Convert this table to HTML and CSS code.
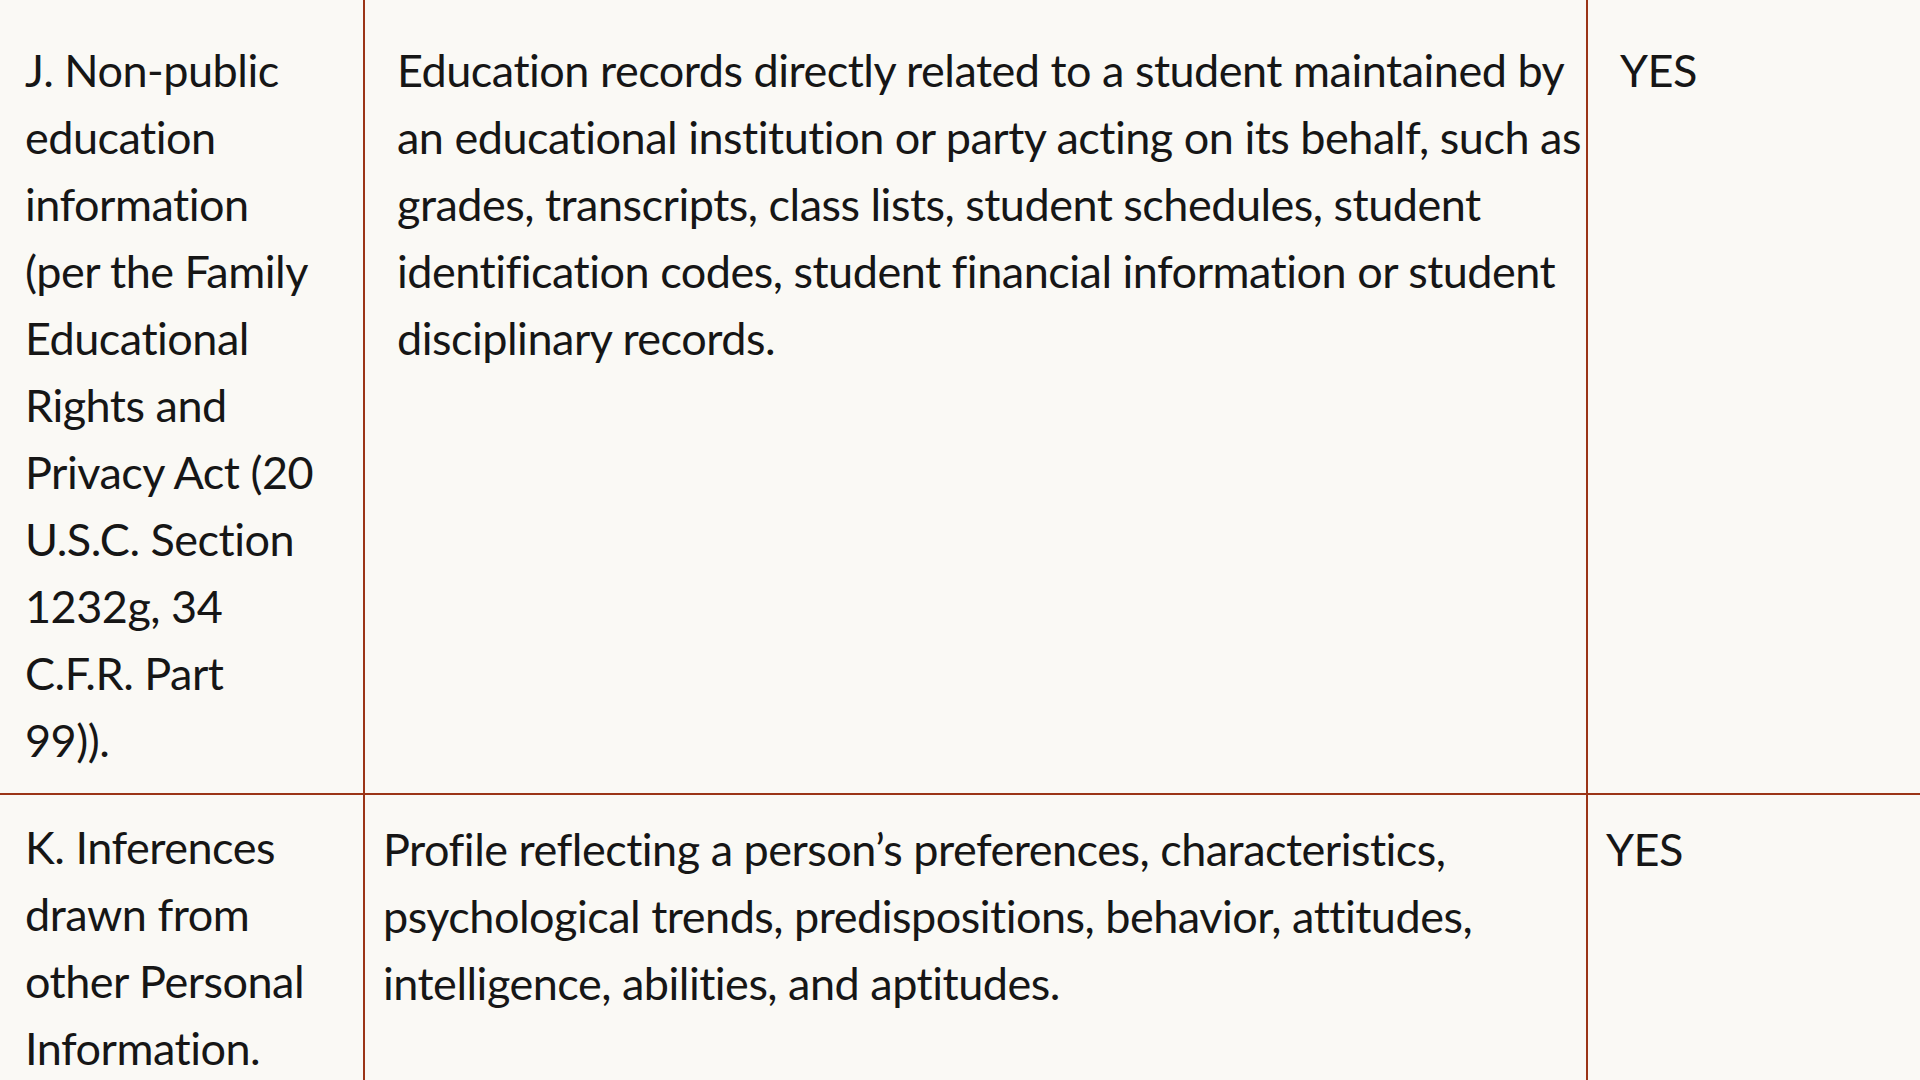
FILE: index.html
```html
<!DOCTYPE html>
<html lang="en">
<head>
<meta charset="utf-8">
<title>Categories of Personal Information</title>
<link rel="stylesheet" href="styles.css">
</head>
<body>
<div class="table">
  <div class="row row-first">
    <div class="cell cell-category">J. Non-public education information (per the Family Educational Rights and Privacy Act (20 U.S.C. Section 1232g, 34 C.F.R. Part 99)).</div>
    <div class="cell cell-examples cell-indented">Education records directly related to a student maintained by an educational institution or party acting on its behalf, such as grades, transcripts, class lists, student schedules, student identification codes, student financial information or student disciplinary records.</div>
    <div class="cell cell-collected cell-indented">YES</div>
  </div>
  <div class="row">
    <div class="cell cell-category">K. Inferences drawn from other Personal Information.</div>
    <div class="cell cell-examples cell-offset">Profile reflecting a person’s preferences, characteristics, psychological trends, predispositions, behavior, attitudes, intelligence, abilities, and aptitudes.</div>
    <div class="cell cell-collected cell-offset">YES</div>
  </div>
</div>
</body>
</html>
```
FILE: styles.css
```css
html, body {
  margin: 0;
  padding: 0;
  background: #faf9f5;
}

body {
  font-family: Lato, "Open Sans", "Liberation Sans", sans-serif;
  font-size: 45px;
  line-height: 67px;
  letter-spacing: -0.5px;
  font-variant-ligatures: none;
  color: #161616;
  overflow: hidden;
}

.table {
  width: 1920px;
}

.row {
  display: grid;
  grid-template-columns: 365px 1223px 1fr;
}

.row + .row {
  border-top: 2px solid #9b3517;
}

.cell {
  padding: 19px 0 19px 18px;
}

.cell-category {
  padding-left: 25px;
  padding-right: 46px;
  border-right: 2px solid #9b3517;
}

.cell-examples {
  border-right: 2px solid #9b3517;
}

.row-first .cell {
  padding-top: 37px;
}

.cell-indented {
  padding-left: 32px;
}

.cell-offset {
  padding-top: 21px;
}
```
